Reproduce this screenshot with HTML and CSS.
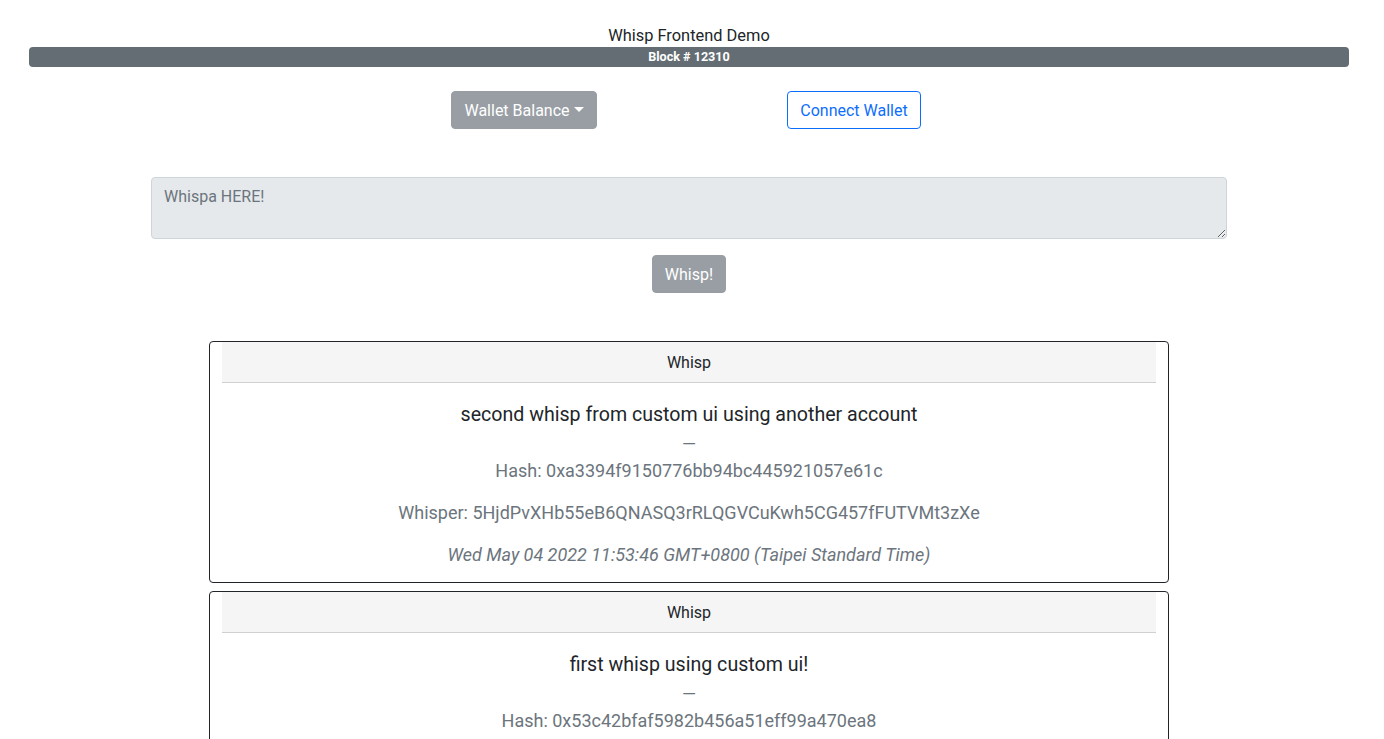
FILE: index.html
```html
<!DOCTYPE html>
<html lang="en">
<head>
<meta charset="utf-8">
<title>Whisp Frontend Demo</title>
<link rel="stylesheet" href="styles.css">
</head>
<body>
<div class="page">
  <div class="container">
    <h1 class="title">Whisp Frontend Demo</h1>
    <div class="progress"><div class="progress-bar">Block # 12310</div></div>

    <div class="btn-row">
      <div class="col"><button class="btn btn-secondary dropdown-toggle" disabled>Wallet Balance</button></div>
      <div class="col"><button class="btn btn-outline-primary">Connect Wallet</button></div>
    </div>

    <div class="form-row">
      <div class="col-10">
        <textarea class="form-control" rows="2" placeholder="Whispa HERE!" disabled></textarea>
      </div>
    </div>

    <div class="submit-row">
      <button class="btn btn-secondary" disabled>Whisp!</button>
    </div>

    <div class="feed">
      <div class="card">
        <div class="card-header">Whisp</div>
        <div class="card-body">
          <h5 class="card-title">second whisp from custom ui using another account</h5>
          <div class="dash">—</div>
          <p class="card-text">Hash: 0xa3394f9150776bb94bc445921057e61c</p>
          <p class="card-text">Whisper: 5HjdPvXHb55eB6QNASQ3rRLQGVCuKwh5CG457fFUTVMt3zXe</p>
          <p class="card-text date">Wed May 04 2022 11:53:46 GMT+0800 (Taipei Standard Time)</p>
        </div>
      </div>
      <div class="card">
        <div class="card-header">Whisp</div>
        <div class="card-body">
          <h5 class="card-title">first whisp using custom ui!</h5>
          <div class="dash">—</div>
          <p class="card-text">Hash: 0x53c42bfaf5982b456a51eff99a470ea8</p>
        </div>
      </div>
    </div>
  </div>
</div>
</body>
</html>
```

FILE: styles.css
```css
* { box-sizing: border-box; }

html, body {
  margin: 0;
  background: #fff;
}

body {
  padding-right: 6px;
  font-family: Roboto, "Liberation Sans", Arial, sans-serif;
  font-size: 16px;
  line-height: 1.5;
  color: #212529;
}

.container {
  width: 1320px;
  margin: 0 auto;
  padding-top: 24px;
}

.title {
  margin: 0;
  font-size: 16.4px;
  font-weight: 400;
  line-height: 23px;
  text-align: center;
}

.progress {
  height: 20px;
  background: #e9ecef;
  border-radius: 4px;
  overflow: hidden;
  display: flex;
}

.progress-bar {
  width: 100%;
  background: #636d73;
  color: #fff;
  font-size: 12.6px;
  font-weight: 700;
  line-height: 20px;
  text-align: center;
}

.btn-row {
  display: flex;
  justify-content: center;
  margin-top: 24px;
}

.btn-row .col {
  width: 330px;
  text-align: center;
}

.btn {
  display: inline-block;
  font-family: inherit;
  font-size: 16px;
  line-height: 24px;
  padding: 7px 12px 5px;
  border: 1px solid transparent;
  border-radius: 4px;
  background: transparent;
  cursor: pointer;
}

.btn-secondary {
  background: #989ea4;
  border-color: #989ea4;
  color: #fff;
}

.btn-outline-primary {
  color: #0d6efd;
  border-color: #0d6efd;
  background: #fff;
}

.dropdown-toggle::after {
  content: "";
  display: inline-block;
  margin-left: 4px;
  vertical-align: 4px;
  border-top: 5px solid #fff;
  border-left: 5px solid transparent;
  border-right: 5px solid transparent;
}

.form-row {
  display: flex;
  justify-content: center;
  margin-top: 48px;
}

.col-10 {
  width: 1100px;
  padding: 0 12px;
}

.form-control {
  display: block;
  width: 100%;
  height: 62px;
  padding: 7px 12px 5px;
  font-family: inherit;
  font-size: 16px;
  line-height: 24px;
  color: #212529;
  background: #e6e9ec;
  border: 1px solid #ced4da;
  border-radius: 4px;
}

.form-control::placeholder {
  color: #6c757d;
  opacity: 1;
}

.submit-row {
  margin-top: 16px;
  text-align: center;
}

.feed {
  margin-top: 48px;
}

.card {
  width: 960px;
  margin: 0 auto 8px;
  border: 1px solid #212529;
  border-radius: 4px;
  padding: 0 12px;
  text-align: center;
}

.card-header {
  height: 41px;
  padding: 9px 16px 7px;
  background: #f5f5f5;
  border-bottom: 1px solid #d0d0d0;
  line-height: 24px;
}

.card-body {
  padding: 17px 0 14px;
}

.card-title {
  margin: 0;
  font-size: 19.6px;
  font-weight: 400;
  line-height: 30px;
}

.dash {
  font-size: 18px;
  line-height: 27px;
  color: #6c757d;
}

.card-text {
  margin: 0 0 15px;
  font-size: 18px;
  line-height: 27px;
  color: #6c757d;
}

.card-text:last-child {
  margin-bottom: 0;
}

.date {
  font-style: italic;
}
```
